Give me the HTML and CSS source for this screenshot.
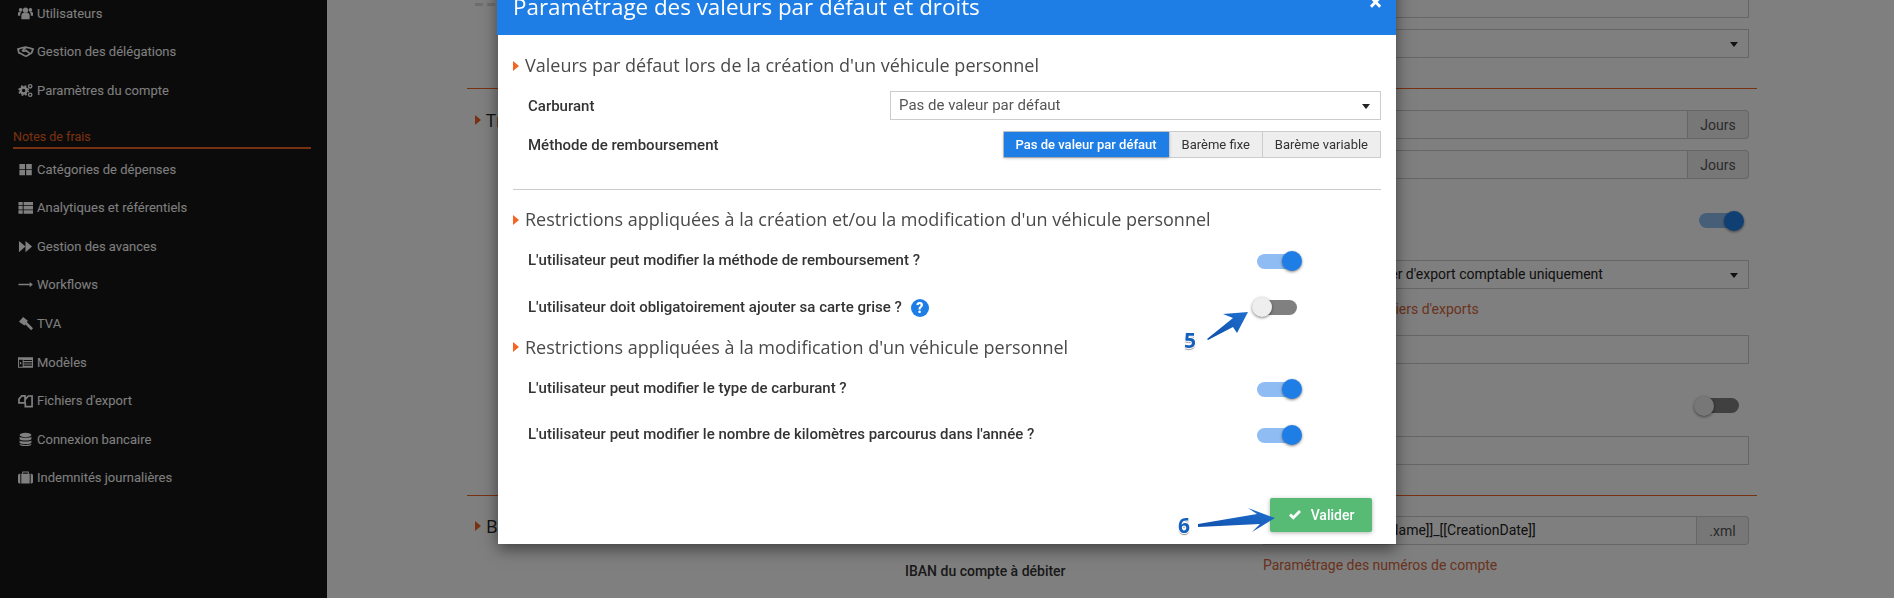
FILE: index.html
```html
<!DOCTYPE html>
<html lang="fr">
<head>
    <meta charset="UTF-8">
    <title>Paramétrage des valeurs par défaut et droits</title>
    <link rel="stylesheet" href="styles.css">
</head>
<body>

<div class="page">
    <aside class="sidebar">
        <ul class="side-list">
            <li><svg class="side-icon" viewBox="0 0 16 16"><circle cx="8" cy="4.5" r="2.8"/><circle cx="2.8" cy="4" r="2"/><circle cx="13.2" cy="4" r="2"/><path d="M3.6 14V10c0-1.800 1.400-2.800 2.600-2.800h3.600c1.200 0 2.600 1 2.600 2.800v4zM0 10.500V8c0-1 .8-1.800 1.800-1.800h1.800c-.8.8-1.200 1.800-1.200 3v1.300zM16 10.500V8c0-1-.8-1.800-1.800-1.800h-1.800c.8.8 1.200 1.800 1.200 3v1.300z"/></svg>Utilisateurs</li>
            <li><svg class="side-icon wide" viewBox="0 0 18 16"><path class="line-icon bold" d="M1 5.500 4.500 4.300 9 3.300 13.500 4.300 17 5.500 15.500 9.500 10 13 8 12.500 3.500 10 2 9.500zM9 3.800 6 7c1.200 1.200 2.400.8 3.500-.3l4.500 3.800"/></svg>Gestion des délégations</li>
            <li><svg class="side-icon" viewBox="0 0 16 16"><circle class="line-icon thick" cx="6" cy="8" r="3.200"/><circle class="line-icon dash" cx="6" cy="8" r="5"/><circle class="line-icon" cx="13" cy="3.500" r="1.800"/><circle class="line-icon" cx="13" cy="12.500" r="1.800"/></svg>Paramètres du compte</li>
        </ul>
        <h4 class="side-title">Notes de frais</h4>
        <ul class="side-list">
            <li><svg class="side-icon" viewBox="0 0 16 16"><path d="M1.500 2h6v5.600h-6zM8.700 2h6v5.600h-6zM1.500 8.600h6v5.600h-6zM8.700 8.600h6v5.600h-6z"/></svg>Catégories de dépenses</li>
            <li><svg class="side-icon" viewBox="0 0 16 16"><path d="M.5 2h4.500v3.600H.5zM6 2h10v3.600H6zM.5 6.500h4.500v3.600H.5zM6 6.500h10v3.600H6zM.5 11h4.500v3.600H.5zM6 11h10v3.600H6z"/></svg>Analytiques et référentiels</li>
            <li><svg class="side-icon" viewBox="0 0 16 16"><path d="M1 2l7 6-7 6zM8 2l7 6-7 6z"/></svg>Gestion des avances</li>
            <li><svg class="side-icon" viewBox="0 0 16 16"><path d="M.5 7.200h12V5.200l3.300 2.800-3.300 2.800V8.800H.5z"/></svg>Workflows</li>
            <li><svg class="side-icon" viewBox="0 0 16 16"><path d="M5.500 1 10.500 5 9.500 6.500 10.500 7.500 16 13 14 15.300 8 9 6.800 10 1 6z"/></svg>TVA</li>
            <li><svg class="side-icon" viewBox="0 0 16 16"><path d="M0 2.500h16v11H0zM1 5v7.500h4V5zM6 5.200v1.300h9V5.200zM6 7.700V9h9V7.700zM6 10.200v1.300h9v-1.300zM2 7l2 1.700-2 1.700z" fill-rule="evenodd"/></svg>Modèles</li>
            <li><svg class="side-icon" viewBox="0 0 16 16"><path class="line-icon bold" d="M1 6.500 4 3 7.500 3v7.500H1zM8 6.500l3-3.300h4v11.300H7.800v-4"/></svg>Fichiers d'export</li>
            <li><svg class="side-icon" viewBox="0 0 16 16"><ellipse cx="8" cy="3.200" rx="6.300" ry="2.400"/><path d="M1.700 5c1 1.600 11.600 1.600 12.600 0v2.600c-1 2-11.600 2-12.600 0zM1.700 9c1 1.600 11.600 1.600 12.600 0v2.400c-1 2-11.600 2-12.600 0zM1.700 12.600c1 1.600 11.600 1.600 12.600 0v.6c-1 2.400-11.600 2.400-12.600 0z"/></svg>Connexion bancaire</li>
            <li><svg class="side-icon" viewBox="0 0 16 16"><path d="M4.500 4h1V2.600h5V4h1V1.600h-7zM0 6c0-1.200.8-2 1.700-2H2.500v10.500H1.700C.8 14.500 0 13.700 0 12.500zM3.500 4h9v10.500h-9zM13.500 4h.8c.9 0 1.700.8 1.700 2v6.500c0 1.200-.8 2-1.700 2h-.8z"/></svg>Indemnités journalières</li>
        </ul>
    </aside>

    <main class="content">
        <section class="block">
            <div class="block-left"><span class="top-icon"></span></div>
            <div class="fields">
                <div class="field"></div>
                <div class="field select-field"><span class="caret"></span></div>
            </div>
        </section>

        <section class="block block-two">
            <div class="block-left"><h3 class="block-title">Traitement</h3></div>
            <div class="fields">
                <div class="group"><div class="field"></div><span class="addon">Jours</span></div>
                <div class="group"><div class="field"></div><span class="addon">Jours</span></div>
                <div class="switch-row row-on"><span class="switch on"></span></div>
                <div class="field select-field dark-text">Télécharger le fichier d'export comptable uniquement<span class="caret"></span></div>
                <a class="side-link">Paramétrage des fichiers d'exports</a>
                <div class="field after-link"></div>
                <div class="switch-row row-off"><span class="switch"></span></div>
                <div class="field"></div>
            </div>
        </section>

        <section class="block block-three">
            <div class="block-left">
                <h3 class="block-title">Banque</h3>
                <p class="iban">IBAN du compte à débiter</p>
            </div>
            <div class="fields">
                <div class="group"><div class="field dark-text">[[ExpenseReportName]]_[[CreationDate]]</div><span class="addon xml">.xml</span></div>
                <a class="side-link">Paramétrage des numéros de compte</a>
            </div>
        </section>
    </main>
</div>

<div class="overlay"></div>

<div class="modal">
    <div class="modal-head">
        <h2>Paramétrage des valeurs par défaut et droits</h2>
        <span class="close">×</span>
    </div>
    <div class="modal-body">
        <h3 class="heading top-heading">Valeurs par défaut lors de la création d'un véhicule personnel</h3>
        <div class="form-row first">
            <label>Carburant</label>
            <div class="picker">Pas de valeur par défaut<span class="caret"></span></div>
        </div>
        <div class="form-row second">
            <label>Méthode de remboursement</label>
            <div class="choices">
                <span class="choice active">Pas de valeur par défaut</span>
                <span class="choice">Barème fixe</span>
                <span class="choice">Barème variable</span>
            </div>
        </div>
        <hr>
        <h3 class="heading">Restrictions appliquées à la création et/ou la modification d'un véhicule personnel</h3>
        <div class="rule rule-a">
            <label>L'utilisateur peut modifier la méthode de remboursement ?</label>
            <span class="switch on"></span>
        </div>
        <div class="rule rule-b">
            <label>L'utilisateur doit obligatoirement ajouter sa carte grise ?<span class="help">?</span></label>
            <span class="switch"></span>
        </div>
        <h3 class="heading after-rule">Restrictions appliquées à la modification d'un véhicule personnel</h3>
        <div class="rule rule-c">
            <label>L'utilisateur peut modifier le type de carburant ?</label>
            <span class="switch on"></span>
        </div>
        <div class="rule rule-c">
            <label>L'utilisateur peut modifier le nombre de kilomètres parcourus dans l'année ?</label>
            <span class="switch on"></span>
        </div>
        <div class="modal-foot">
            <button type="button" class="valid-button">
                <svg class="check" viewBox="0 0 14 12"><path d="M1 6.500 3 4.500 5.300 6.800 11 1l2 2-7.700 7.800z"/></svg>Valider
            </button>
        </div>
    </div>
</div>

<!-- annotations -->
<svg class="marks" viewBox="0 0 1894 598">
    <defs>
        <linearGradient id="arrowBlue" x1="0" y1="1" x2="1" y2="0">
            <stop offset="0" stop-color="#0f4fa8"/>
            <stop offset="1" stop-color="#1e6fd0"/>
        </linearGradient>
    </defs>
    <path fill="url(#arrowBlue)" d="M1207 339 1233 318 1223 314 1248 312 1237 333 1233 327 1208 340z"/>
    <path fill="url(#arrowBlue)" d="M1198 524 1257 514 1248 508 1275 518 1252 532 1260 524 1198 527z"/>
</svg>
<span class="num num-five">5</span>
<span class="num num-six">6</span>

</body>
</html>
```

FILE: styles.css
```css
* {
    box-sizing: border-box;
}
html, body {
    margin: 0;
    height: 598px;
    overflow: hidden;
}
body {
    font-family: Roboto, sans-serif;
    font-size: 14px;
    color: #333;
    background-color: #fff;
}
.page {
    display: flex;
    height: 598px;
    overflow: hidden;
}
.sidebar {
    width: 327px;
    flex-shrink: 0;
    background-color: #161616;
    color: #fff;
}
.side-list {
    list-style-type: none;
    margin: 1px 0 0;
    padding: 0;
}
.sidebar .side-list:first-child {
    margin-top: -6px;
}
.side-list li {
    display: flex;
    align-items: center;
    height: 38.6px;
    padding-left: 18px;
    font-size: 13px;
    gap: 4px;
}
.side-icon {
    width: 15px;
    height: 15px;
    fill: #fff;
}
.side-icon.wide {
    width: 17px;
    margin-left: -1px;
    margin-right: -1px;
}
.line-icon {
    fill: none;
    stroke: #fff;
    stroke-width: 1.4;
}
.line-icon.bold {
    stroke-width: 1.8;
}
.line-icon.thick {
    stroke-width: 2.6;
}
.line-icon.dash {
    stroke-width: 1.6;
    stroke-dasharray: 2 2;
}
.side-title {
    margin: 17px 16px 0 13px;
    height: 22px;
    padding-top: 2px;
    border-bottom: 2px solid #f26522;
    color: #f26522;
    font-size: 12.5px;
    font-weight: 400;
    line-height: 15px;
}

/* page behind the dialog */
.content {
    flex: 1;
    margin-top: -11px;
    padding-left: 140px;
}
.block {
    display: flex;
    width: 1290px;
    height: 100px;
    border-bottom: 1px solid #f26522;
}
.block-two {
    height: 407px;
    padding-top: 21px;
}
.block-three {
    height: 120px;
    padding-top: 20px;
}
.block-left {
    width: 796px;
    flex-shrink: 0;
}
.top-icon {
    display: block;
    width: 22px;
    height: 3px;
    margin: 14px 0 0 8px;
    background: linear-gradient(90deg, #ddd 0 8px, transparent 8px 12px, #ddd 12px 20px, transparent 20px);
}
.block-title {
    position: relative;
    margin: -2px 0 0;
    padding-left: 19px;
    font-family: "Open Sans", sans-serif;
    font-size: 18px;
    font-weight: 400;
    line-height: 25px;
    color: #222;
}
.block-title::before,
.heading::before {
    content: "";
    position: absolute;
    left: 8px;
    top: 7px;
    border-left: 6px solid #f26522;
    border-top: 5px solid transparent;
    border-bottom: 5px solid transparent;
}
.iban {
    margin: 23px 0 0 438px;
    font-weight: 500;
    font-size: 14px;
    line-height: 18px;
}
.fields {
    width: 486px;
}
.field {
    flex: 1;
    height: 29px;
    border: 1px solid #ccc;
    padding: 0 9px;
    line-height: 27px;
    font-size: 14px;
    white-space: nowrap;
    overflow: hidden;
}
.select-field {
    position: relative;
    margin-top: 11px;
}
.dark-text {
    color: #222;
}
.group .dark-text {
    padding-left: 23px;
}
.group {
    display: flex;
    margin-bottom: 11px;
}
.addon {
    width: 61px;
    height: 29px;
    border: 1px solid #ccc;
    border-left: none;
    border-radius: 0 4px 4px 0;
    background-color: #eee;
    color: #555;
    text-align: center;
    line-height: 29px;
}
.addon.xml {
    width: 52px;
}
.caret {
    position: absolute;
    right: 10px;
    top: 12px;
    border-top: 5px solid #222;
    border-left: 4px solid transparent;
    border-right: 4px solid transparent;
}
.switch-row {
    display: flex;
    justify-content: flex-end;
    padding-right: 10px;
}
.row-on {
    margin-top: 34px;
    height: 20px;
}
.row-on + .select-field {
    margin-top: 27px;
}
.row-off {
    margin-top: 34px;
    height: 20px;
}
.row-off + .field {
    margin-top: 18px;
}
.side-link {
    display: block;
    margin-top: 11px;
    color: #d4663a;
    font-size: 14px;
    line-height: 18px;
}
.after-link {
    margin-top: 17px;
}

.switch {
    position: relative;
    display: block;
    width: 40px;
    height: 15px;
    border-radius: 8px;
    background-color: #808080;
    flex-shrink: 0;
}
.switch::after {
    content: "";
    position: absolute;
    top: -2.5px;
    left: -5px;
    width: 20px;
    height: 20px;
    border-radius: 50%;
    background-color: #eee;
    box-shadow: 0 1px 3px rgba(0, 0, 0, 0.5);
}
.switch.on {
    background-color: #8fbdf3;
}
.switch.on::after {
    left: 25px;
    background-color: #1e7ee6;
}

.overlay {
    position: fixed;
    inset: 0;
    background-color: rgba(0, 0, 0, 0.5);
}

/* dialog */
.modal {
    position: absolute;
    left: 498px;
    top: -27px;
    width: 898px;
    height: 571px;
    background-color: #fff;
    box-shadow: 0 5px 15px rgba(0, 0, 0, 0.5);
}
.modal-head {
    display: flex;
    justify-content: space-between;
    height: 62px;
    margin-left: -1px;
    padding: 19px 14px 0 16px;
    background-color: #1e7ee6;
    color: #fff;
}
.modal-head h2 {
    margin: 0;
    font-family: "Open Sans", sans-serif;
    font-size: 22.4px;
    font-weight: 400;
    line-height: 30px;
}
.close {
    margin-top: -3px;
    font-size: 24px;
    font-weight: 700;
    line-height: 26px;
}
.modal-body {
    padding: 0 15px;
}
.heading {
    position: relative;
    margin: 20px 0 0;
    height: 20px;
    padding-left: 12px;
    font-family: "Open Sans", sans-serif;
    font-size: 18px;
    font-weight: 400;
    line-height: 18px;
    color: #4a4a4a;
    white-space: nowrap;
}
.heading.top-heading {
    margin-top: 21px;
}
.heading::before {
    left: 0;
    top: 5px;
}
.form-row {
    display: flex;
    align-items: center;
    justify-content: space-between;
    padding-left: 15px;
}
.form-row.first {
    margin-top: 15px;
    height: 29px;
}
.form-row.second {
    margin-top: 11px;
    height: 27px;
}
label {
    font-weight: 500;
    font-size: 15px;
    color: #333;
    white-space: nowrap;
}
.picker {
    position: relative;
    width: 491px;
    height: 29px;
    padding-left: 8px;
    border: 1px solid #ccc;
    font-size: 15px;
    line-height: 27px;
    color: #555;
}
.choices {
    display: flex;
    height: 27px;
    border: 1px solid #ccc;
    background-color: #eee;
    font-size: 13px;
}
.choice {
    padding: 0 12px;
    line-height: 25px;
    border-left: 1px solid #ccc;
}
.choice.active {
    margin: 0;
    border-left: none;
    font-weight: 500;
    background-color: #1e7ee6;
    color: #fff;
    box-shadow: 0 1px 3px rgba(0, 0, 0, 0.3);
}
hr {
    margin: 31px 0 0;
    border: none;
    border-top: 1px solid #ccc;
}
.rule {
    display: flex;
    align-items: center;
    justify-content: space-between;
    height: 30px;
    padding: 0 84px 0 15px;
}
.rule .switch {
    margin-top: 2px;
}
.rule-a {
    margin-top: 15px;
}
.rule-b {
    margin-top: 17px;
}
.rule-b .switch {
    margin-top: 0;
}
.rule-c {
    margin-top: 16px;
}
.heading.after-rule {
    margin-top: 15px;
    line-height: 20px;
}
.help {
    display: inline-block;
    width: 18px;
    height: 18px;
    margin-left: 9px;
    border-radius: 50%;
    background-color: #1e7ee6;
    color: #fff;
    font-size: 14px;
    font-weight: 900;
    text-align: center;
    line-height: 18px;
    vertical-align: -1px;
}
.modal-foot {
    display: flex;
    justify-content: flex-end;
    margin-top: 49px;
    padding-right: 9px;
}
.valid-button {
    display: flex;
    align-items: center;
    justify-content: center;
    gap: 9px;
    width: 102px;
    height: 34px;
    border: none;
    border-radius: 2px;
    background-color: #57bb76;
    color: #fff;
    font-family: Roboto, sans-serif;
    font-size: 14px;
    font-weight: 500;
    box-shadow: 0 1px 4px rgba(0, 0, 0, 0.3);
}
.check {
    width: 14px;
    height: 12px;
    fill: #fff;
}

/* annotations drawn over the screenshot */
.marks {
    position: absolute;
    left: 0;
    top: 0;
    width: 1894px;
    height: 598px;
    pointer-events: none;
}
.num {
    position: absolute;
    font-family: "Open Sans", sans-serif;
    font-size: 21px;
    font-weight: 700;
    line-height: 24px;
    color: #1560bd;
    text-shadow: 1px 0 0 #fff, -1px 0 0 #fff, 0 1px 0 #fff, 0 -1px 0 #fff, 0 2px 1px #999;
}
.num-five {
    left: 1184px;
    top: 328px;
}
.num-six {
    left: 1178px;
    top: 513px;
}
```
